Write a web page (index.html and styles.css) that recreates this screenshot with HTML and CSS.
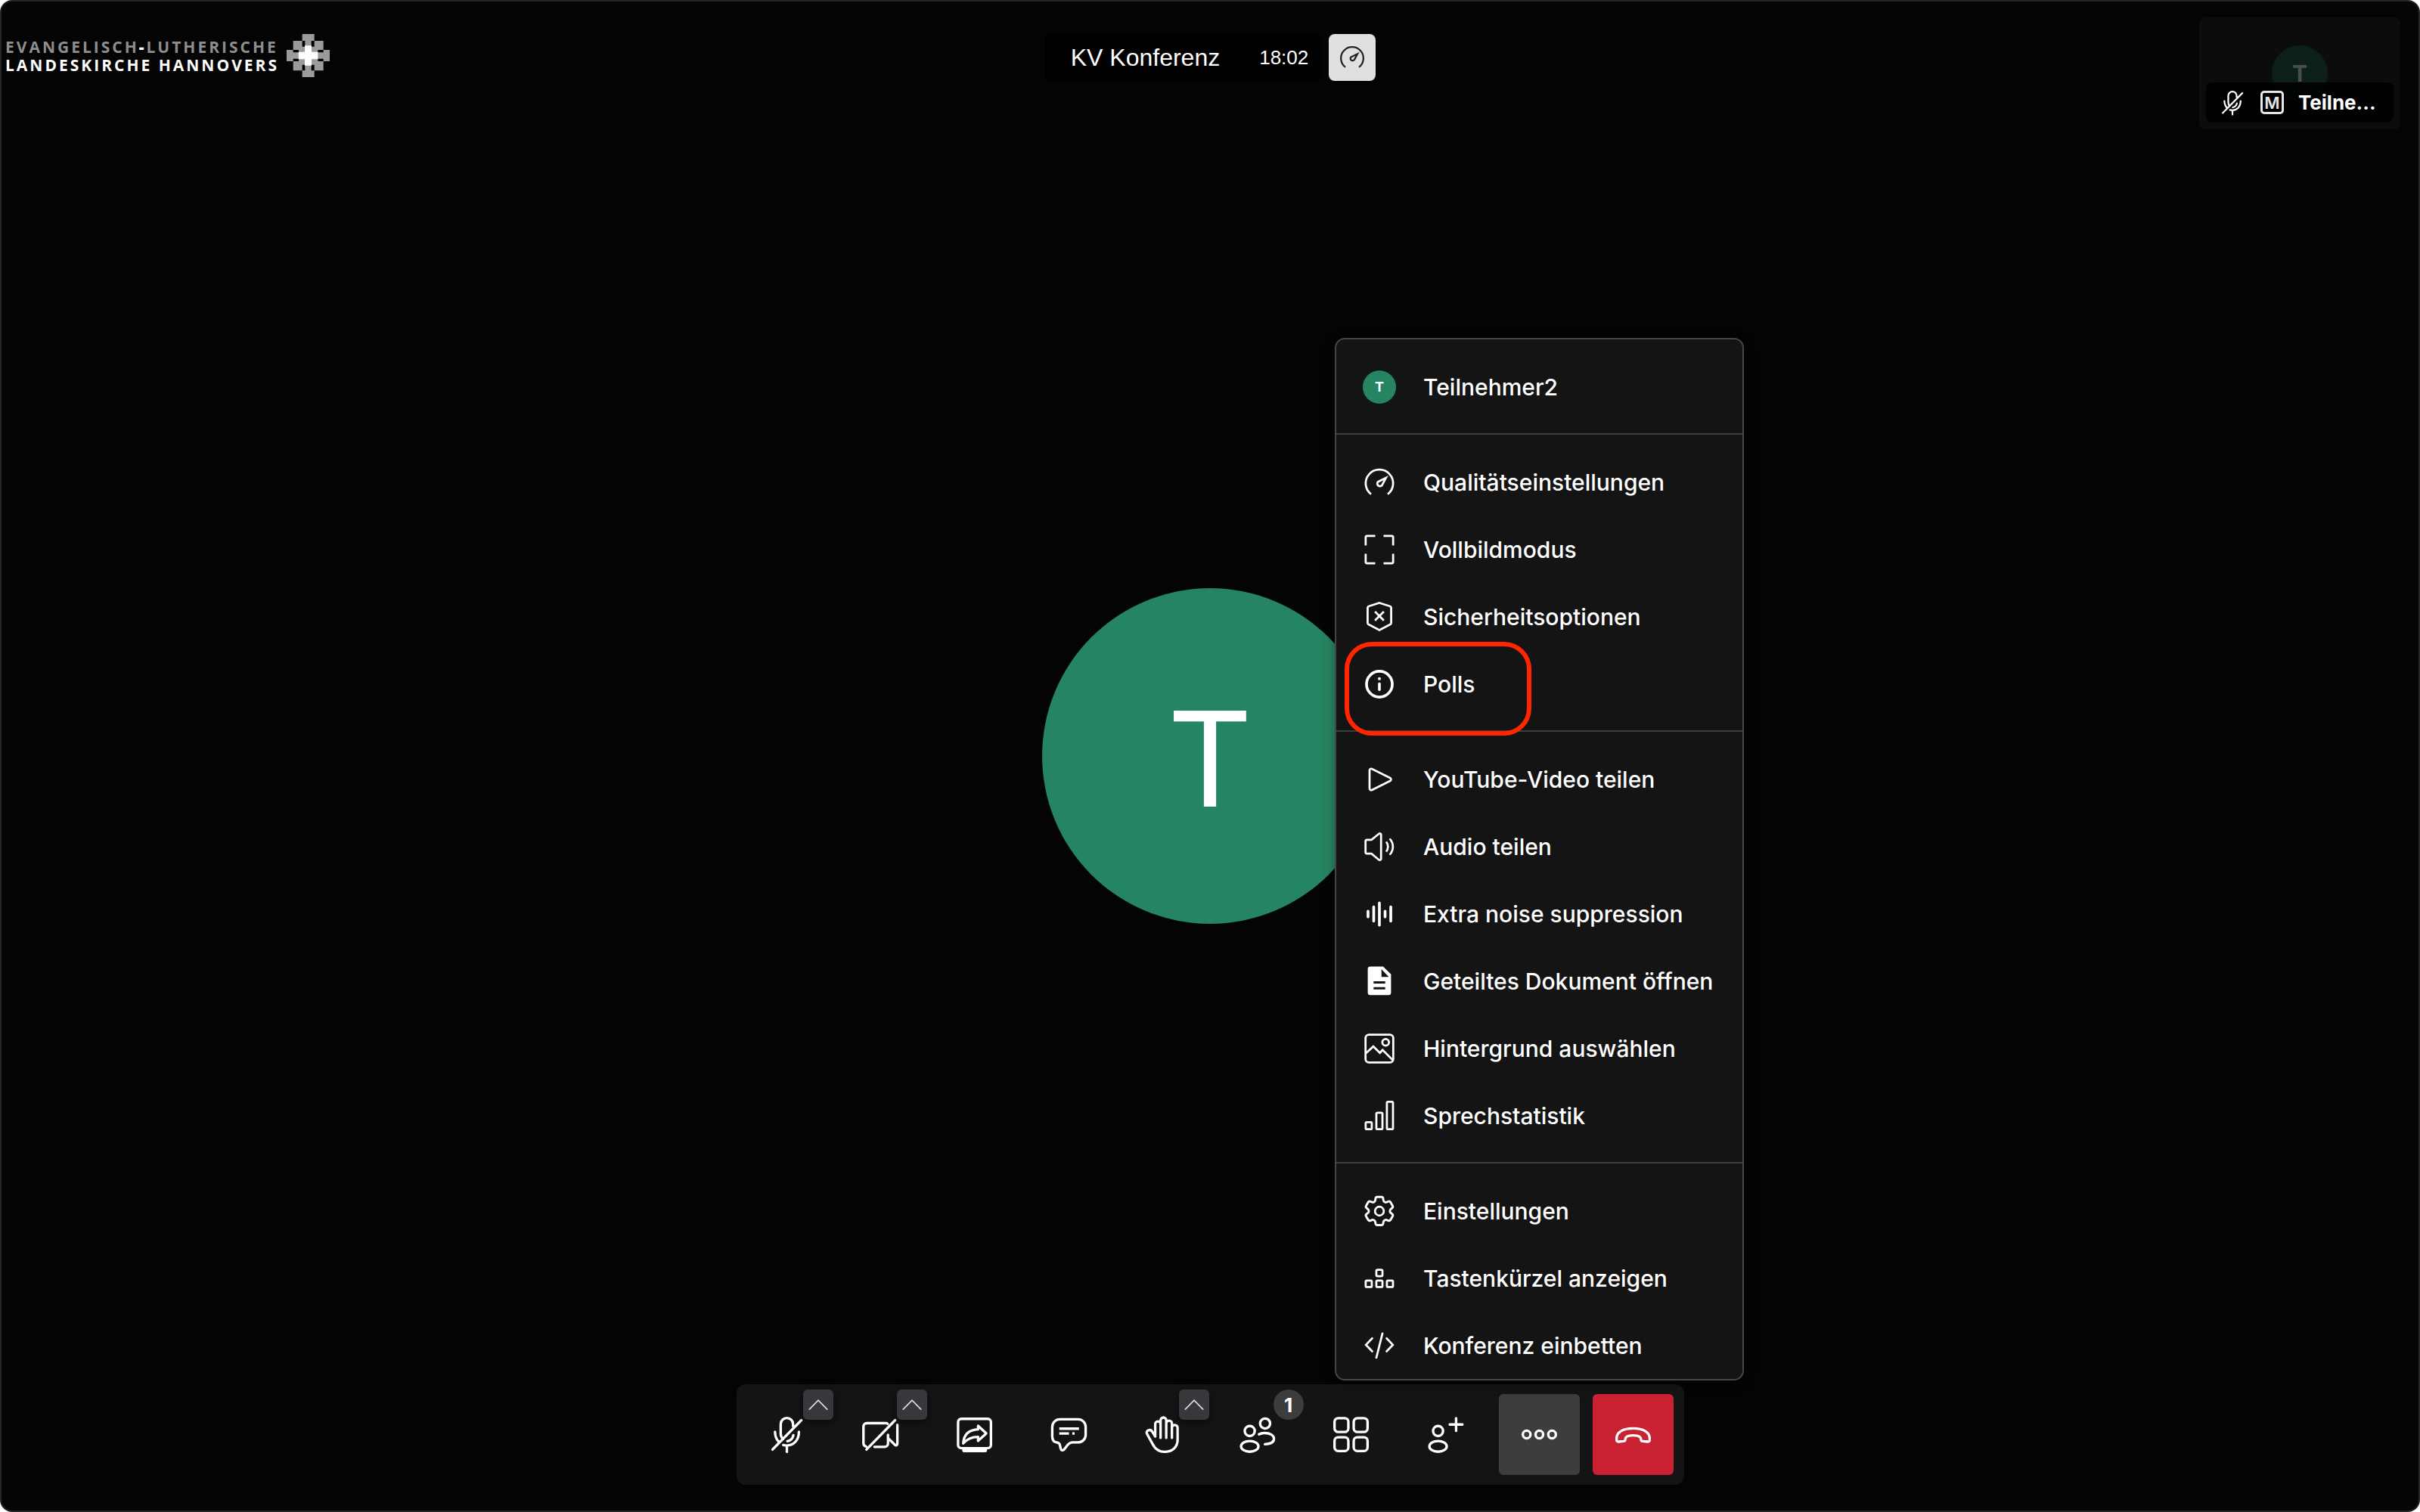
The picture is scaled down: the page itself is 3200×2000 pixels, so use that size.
FILE: index.html
```
<!DOCTYPE html>
<html lang="de">
<head>
  <meta charset="UTF-8" />
  <meta name="viewport" content="width=device-width, initial-scale=1" />
  <title>KV Konferenz</title>
  <link rel="stylesheet" href="styles.css">
</head>
<body>
  <!-- icon sprite -->
  <svg class="sprite" aria-hidden="true">
    <symbol id="i-gauge" viewBox="0 0 24 24">
      <path d="M6 20.6A9.9 9.9 0 1 1 18 20.6" />
      <path d="M16.7 8.8l-2.8 5.3a1.9 1.9 0 1 1-3-2.4z" />
    </symbol>
    <symbol id="i-fullscreen" viewBox="0 0 24 24">
      <path d="M9 2.1H3.1a1 1 0 0 0-1 1V9M15 2.1h5.9a1 1 0 0 1 1 1V9M9 21.9H3.1a1 1 0 0 1-1-1V15M15 21.9h5.9a1 1 0 0 0 1-1V15" />
    </symbol>
    <symbol id="i-shield" viewBox="0 0 24 24">
      <path d="M12 1.9l7.4 2.3c.7.2 1.1.7 1.1 1.4v10.6c0 .6-.3 1-.8 1.3L12 21.5l-7.7-4c-.5-.3-.8-.7-.8-1.3V5.6c0-.7.4-1.2 1.1-1.4z" />
      <path d="M8.8 8.2l6.4 6.4M15.2 8.2l-6.4 6.4" />
    </symbol>
    <symbol id="i-info" viewBox="0 0 24 24">
      <circle cx="12" cy="12" r="9.3" stroke-width="2" />
      <path d="M12 11.8v4.2" stroke-width="2" stroke-linecap="round" />
      <circle class="fill" cx="12" cy="8" r="1.1" />
    </symbol>
    <symbol id="i-play" viewBox="0 0 24 24">
      <path d="M4.9 5.5v13c0 1 .9 1.5 1.7 1.1l13.1-6.5c.9-.5.9-1.7 0-2.2L6.6 4.4c-.8-.4-1.7.1-1.7 1.1z" />
    </symbol>
    <symbol id="i-audio" viewBox="0 0 24 24">
      <path d="M13.2 3.4v17.3c0 .9-1 1.2-1.6.7L6.3 17H3a1 1 0 0 1-1-1V8a1 1 0 0 1 1-1h3.3l5.3-4.3c.6-.5 1.6-.2 1.6.7z" />
      <path d="M16.9 8.4c1.7 2.1 1.7 5.1 0 7.2M19.4 6.2c3.1 3.3 3.1 8.3 0 11.6" />
    </symbol>
    <symbol id="i-noise" viewBox="0 0 24 24">
      <path d="M3.8 10v4M7.9 6.8v10.4M12 4v16M16.1 10v4M20.2 6.8v10.4" stroke-width="2" stroke-linecap="round" />
    </symbol>
    <symbol id="i-doc" viewBox="0 0 24 24">
      <path class="fill" fill-rule="evenodd" d="M5.4 1.3h9.3l5.7 5.6v13.3a1.8 1.8 0 0 1-1.8 1.8H5.4a1.8 1.8 0 0 1-1.8-1.8V3.1a1.8 1.8 0 0 1 1.8-1.8zM13.5 3.3v5.6h5.3zM7.8 12v1.6h8.4V12zM7.8 16.2v1.6h8.4v-1.6z" />
    </symbol>
    <symbol id="i-picture" viewBox="0 0 24 24">
      <rect x="2" y="2" width="20" height="20" rx="2.4" />
      <circle cx="16.5" cy="7.5" r="2.4" />
      <path d="M2.2 15.4l5.4-4.9 4.8 4.6 1.9-2.1 7.4 7.4" />
    </symbol>
    <symbol id="i-stats" viewBox="0 0 24 24">
      <rect x="2.1" y="16.6" width="4.4" height="5" rx="0.8" />
      <rect x="9.8" y="9.8" width="4.4" height="11.8" rx="0.8" />
      <rect x="17.4" y="1.9" width="4.4" height="19.7" rx="0.8" />
    </symbol>
    <symbol id="i-gear" viewBox="0 0 24 24">
      <path transform="translate(-1.6 -1.6) scale(1.13)" stroke-width="1.4" d="M9.594 3.94c.09-.542.56-.94 1.11-.94h2.593c.55 0 1.02.398 1.11.94l.213 1.281c.063.374.313.686.645.87.074.04.147.083.22.127.325.196.72.257 1.075.124l1.217-.456a1.125 1.125 0 0 1 1.37.49l1.296 2.247a1.125 1.125 0 0 1-.26 1.431l-1.003.827c-.293.241-.438.613-.43.992a7.723 7.723 0 0 1 0 .255c-.008.378.137.75.43.991l1.004.827c.424.35.534.955.26 1.43l-1.298 2.247a1.125 1.125 0 0 1-1.369.491l-1.217-.456c-.355-.133-.75-.072-1.076.124a6.47 6.47 0 0 1-.22.128c-.331.183-.581.495-.644.869l-.213 1.281c-.09.543-.56.94-1.11.94h-2.594c-.55 0-1.019-.398-1.11-.94l-.213-1.281c-.062-.374-.312-.686-.644-.87a6.52 6.52 0 0 1-.22-.127c-.325-.196-.72-.257-1.076-.124l-1.217.456a1.125 1.125 0 0 1-1.369-.49l-1.297-2.247a1.125 1.125 0 0 1 .26-1.431l1.004-.827c.292-.24.437-.613.43-.991a6.932 6.932 0 0 1 0-.255c.007-.38-.138-.751-.43-.992l-1.004-.827a1.125 1.125 0 0 1-.26-1.43l1.297-2.247a1.125 1.125 0 0 1 1.37-.491l1.216.456c.356.133.751.072 1.076-.124.072-.044.146-.086.22-.128.332-.183.582-.495.644-.869l.214-1.28z" />
      <circle cx="12" cy="12" r="3.2" />
    </symbol>
    <symbol id="i-keys" viewBox="0 0 24 24">
      <rect x="9.8" y="5.8" width="4.4" height="4.6" rx="0.8" />
      <rect x="2.1" y="13.6" width="4.4" height="4.6" rx="0.8" />
      <rect x="9.8" y="13.6" width="4.4" height="4.6" rx="0.8" />
      <rect x="17.4" y="13.6" width="4.4" height="4.6" rx="0.8" />
    </symbol>
    <symbol id="i-embed" viewBox="0 0 24 24">
      <path d="M6.8 6.7l-4.5 4.7 4.5 4.7M17.2 6.7l4.5 4.7-4.5 4.7M14.2 3.2L9.8 20.7" stroke-linecap="round" />
    </symbol>
    <symbol id="i-mic-off" viewBox="0 0 24 24">
      <path stroke-linecap="round" d="M15.7 7V5.8a3.7 3.7 0 0 0-7.4 0v5.8c0 1.4.6 2.4 1.5 3.1M4.9 10.4c0 2.6.9 4.6 2.3 6M19.2 10.4c0 5-3.2 8.2-7.2 8.2-.8 0-1.5-.1-2.2-.3M12 18.6v3.8M15.9 12.4c-.4 2-1.7 3.3-3.6 3.6M20.7 3.4L3.4 21" />
    </symbol>
    <symbol id="i-cam-off" viewBox="0 0 24 24">
      <path stroke-linecap="round" stroke-linejoin="round" d="M16.2 5.6c-.3-.3-.8-.4-1.3-.4H3.7a2 2 0 0 0-2 2v10c0 1 .6 1.8 1.6 2M8.3 19.4h6.1a2 2 0 0 0 2-2v-5.2M16.5 14.2l4.1 4c.6.5 1.4.2 1.4-.6V6.2M20.7 3.4L3.5 21" />
    </symbol>
    <symbol id="i-share" viewBox="0 0 24 24">
      <rect x="2.2" y="2.6" width="19.7" height="17.6" rx="2" />
      <path class="fill" d="M4.7 20.4h14.8v1.2a1 1 0 0 1-1 1H5.7a1 1 0 0 1-1-1z" />
      <path stroke-linejoin="round" d="M5.3 17.3c.3-5 3.2-8.1 8.9-8.4V6.8l4.9 4.5-4.9 4.5v-2.4c-4.2 0-6.6 1.3-8.9 3.9z" />
    </symbol>
    <symbol id="i-chat" viewBox="0 0 24 24">
      <path d="M6.5 2.9h11a4.5 4.5 0 0 1 4.5 4.5v4.8a4.5 4.5 0 0 1-4.5 4.5h-3.1c-1.8 0-2.9 1-3.8 2.3l-1.3 1.7c-.9 1.2-2 .9-2.3-.4l-.5-2.2c-.2-.9-.8-1.2-2-1.4-1.6-.3-2.5-1.7-2.5-3.6V7.4a4.5 4.5 0 0 1 4.5-4.5z" />
      <path d="M6.2 8.5h11.8M6.2 11.4H12M14 11.4h1.4" />
    </symbol>
    <symbol id="i-hand" viewBox="0 0 24 24">
      <path stroke-linecap="round" d="M7.5 13.2V5.7a1.6 1.6 0 0 1 3.2 0M10.7 14V3.5a1.7 1.7 0 0 1 3.4 0V14M14.1 5.4a1.7 1.7 0 0 1 3.4 0V14M17.5 8a1.7 1.7 0 0 1 3.4 0v7.2c0 4.5-3.3 7.2-7.9 7.2-3.3 0-5.6-1.8-7-4.6l-3.4-6.1c-.5-1.1 0-2 .9-2.3s1.8.1 2.3 1l1.7 2.8" />
    </symbol>
    <symbol id="i-people" viewBox="0 0 24 24">
      <circle cx="7.5" cy="9.9" r="3" />
      <ellipse cx="7.5" cy="19.1" rx="5.2" ry="3.2" />
      <circle cx="16.7" cy="5.4" r="3" />
      <path stroke-linecap="round" d="M13 11.9c.9-.5 2-.8 3.3-.8 3.4 0 5.7 1.4 5.7 3.5 0 1.8-1.9 3-5.4 3.2" />
    </symbol>
    <symbol id="i-grid" viewBox="0 0 24 24">
      <rect x="2.1" y="2.2" width="8.3" height="8.3" rx="2.2" />
      <rect x="13.6" y="2.2" width="8.3" height="8.3" rx="2.2" />
      <rect x="2.1" y="13.6" width="8.3" height="8.3" rx="2.2" />
      <rect x="13.6" y="13.6" width="8.3" height="8.3" rx="2.2" />
    </symbol>
    <symbol id="i-invite" viewBox="0 0 24 24">
      <circle cx="7.5" cy="9.9" r="3" />
      <ellipse cx="7.5" cy="19.1" rx="5.2" ry="3.2" />
      <path stroke-linecap="round" d="M18.3 2.2v7.6M14.5 6h7.6" />
    </symbol>
    <symbol id="i-more" viewBox="0 0 24 24">
      <circle cx="4.4" cy="12" r="2.3" />
      <circle cx="12" cy="12" r="2.3" />
      <circle cx="19.6" cy="12" r="2.3" />
    </symbol>
    <symbol id="i-hangup" viewBox="0 0 24 24">
      <path stroke-linejoin="round" d="M2.1 14.2c0-3.6 4-5.9 9.9-5.9s9.9 2.3 9.9 5.9v1.2c0 .6-.5 1-1.1.9l-3.1-.3c-.6 0-1-.5-1-1.1 0-1.4-1.6-2.4-4.7-2.4s-4.7 1-4.7 2.4c0 .6-.4 1-1 1.1l-3.1.3c-.6.1-1.1-.3-1.1-.9z" />
    </symbol>
    <symbol id="i-up" viewBox="0 0 24 24">
      <path d="M2 17.2L12 7l10 10.2" stroke-linecap="round" />
    </symbol>
  </svg>

  <div class="app">
    <main class="stage">
      <div class="avatar avatar-big">T</div>
    </main>

    <header class="topbar">
      <a class="logo" href="#">
        <span class="logo-text">
          <span class="logo-sub">EVANGELISCH<b>-</b>LUTHERISCHE</span>
          <span>LANDESKIRCHE HANNOVERS</span>
        </span>
        <svg class="logo-mark" viewBox="0 0 171 171" aria-hidden="true">
          <path fill="#9b9b9b" d="M62 0h48v27h36v36h25v45h-25v37h-36v26H62v-26H26v-37H0V63h26V27h36z" />
          <path fill="#000" d="M62 27h11v23H62zM98 27h12v23H98zM62 122h11v23H62zM98 122h12v23H98zM26 63h22v10H26zM124 63h22v10h-22zM26 98h22v10H26zM124 98h22v10h-22z" />
          <path fill="#fff" d="M72 46h27v25h25v29H99v25H72v-25H47V71h25z" />
        </svg>
      </a>

      <div class="subject">
        <div class="subject-pill">
          <h1 class="subject-name">KV Konferenz</h1>
          <span class="subject-time">18:02</span>
        </div>
        <button class="quality" type="button" aria-label="Qualität">
          <svg class="icon icon-quality"><use href="#i-gauge" /></svg>
        </button>
      </div>

      <div class="tile">
        <div class="avatar avatar-tile">T</div>
        <div class="tile-label">
          <svg class="icon icon-tile"><use href="#i-mic-off" /></svg>
          <span class="moderator">M</span>
          <span>Teilne...</span>
        </div>
      </div>
    </header>

    <footer class="toolbar">
      <div class="tool">
        <button class="tool-btn" type="button" aria-label="Mikrofon"><svg class="icon"><use href="#i-mic-off" /></svg></button>
        <button class="tool-more" type="button" aria-label="Audioeinstellungen"><svg class="icon"><use href="#i-up" /></svg></button>
      </div>
      <div class="tool">
        <button class="tool-btn" type="button" aria-label="Kamera"><svg class="icon"><use href="#i-cam-off" /></svg></button>
        <button class="tool-more" type="button" aria-label="Videoeinstellungen"><svg class="icon"><use href="#i-up" /></svg></button>
      </div>
      <div class="tool">
        <button class="tool-btn" type="button" aria-label="Bildschirm teilen"><svg class="icon"><use href="#i-share" /></svg></button>
      </div>
      <div class="tool">
        <button class="tool-btn" type="button" aria-label="Chat"><svg class="icon"><use href="#i-chat" /></svg></button>
      </div>
      <div class="tool">
        <button class="tool-btn" type="button" aria-label="Hand heben"><svg class="icon"><use href="#i-hand" /></svg></button>
        <button class="tool-more" type="button" aria-label="Reaktionen"><svg class="icon"><use href="#i-up" /></svg></button>
      </div>
      <div class="tool">
        <button class="tool-btn" type="button" aria-label="Anwesende"><svg class="icon"><use href="#i-people" /></svg></button>
        <span class="badge">1</span>
      </div>
      <div class="tool">
        <button class="tool-btn" type="button" aria-label="Kachelansicht"><svg class="icon"><use href="#i-grid" /></svg></button>
      </div>
      <div class="tool">
        <button class="tool-btn" type="button" aria-label="Personen einladen"><svg class="icon"><use href="#i-invite" /></svg></button>
      </div>
      <div class="tool">
        <button class="tool-btn active" type="button" aria-label="Weitere Aktionen"><svg class="icon"><use href="#i-more" /></svg></button>

        <nav class="menu">
          <ul class="menu-group">
            <li><button class="menu-item" type="button"><span class="avatar avatar-menu">T</span>Teilnehmer2</button></li>
          </ul>
          <ul class="menu-group">
            <li><button class="menu-item" type="button"><svg class="icon"><use href="#i-gauge" /></svg>Qualitätseinstellungen</button></li>
            <li><button class="menu-item" type="button"><svg class="icon"><use href="#i-fullscreen" /></svg>Vollbildmodus</button></li>
            <li><button class="menu-item" type="button"><svg class="icon"><use href="#i-shield" /></svg>Sicherheitsoptionen</button></li>
            <li><button class="menu-item marked" type="button"><svg class="icon"><use href="#i-info" /></svg>Polls</button></li>
          </ul>
          <ul class="menu-group">
            <li><button class="menu-item" type="button"><svg class="icon"><use href="#i-play" /></svg>YouTube-Video teilen</button></li>
            <li><button class="menu-item" type="button"><svg class="icon"><use href="#i-audio" /></svg>Audio teilen</button></li>
            <li><button class="menu-item" type="button"><svg class="icon"><use href="#i-noise" /></svg>Extra noise suppression</button></li>
            <li><button class="menu-item" type="button"><svg class="icon"><use href="#i-doc" /></svg>Geteiltes Dokument öffnen</button></li>
            <li><button class="menu-item" type="button"><svg class="icon"><use href="#i-picture" /></svg>Hintergrund auswählen</button></li>
            <li><button class="menu-item" type="button"><svg class="icon"><use href="#i-stats" /></svg>Sprechstatistik</button></li>
          </ul>
          <ul class="menu-group">
            <li><button class="menu-item" type="button"><svg class="icon"><use href="#i-gear" /></svg>Einstellungen</button></li>
            <li><button class="menu-item" type="button"><svg class="icon"><use href="#i-keys" /></svg>Tastenkürzel anzeigen</button></li>
            <li><button class="menu-item" type="button"><svg class="icon"><use href="#i-embed" /></svg>Konferenz einbetten</button></li>
          </ul>
        </nav>
      </div>
      <div class="tool">
        <button class="tool-btn hangup" type="button" aria-label="Auflegen"><svg class="icon"><use href="#i-hangup" /></svg></button>
      </div>
    </footer>
  </div>
</body>
</html>
```
FILE: styles.css
```
*,
*::after {
  box-sizing: border-box;
}
body {
  margin: 0;
  background: #fff;
  color: #fff;
  font-family: Inter, "Liberation Sans", sans-serif;
}
button {
  margin: 0;
  padding: 0;
  border: none;
  background: none;
  color: inherit;
  font: inherit;
  cursor: pointer;
}
ul {
  list-style: none;
  margin: 0;
  padding: 0;
}
.sprite {
  display: none;
}
.icon {
  display: block;
  flex: none;
  width: 44px;
  height: 44px;
  fill: none;
  stroke: currentColor;
  stroke-width: 1.5;
}
.fill {
  fill: currentColor;
  stroke: none;
}

/* stage, top bar and toolbar share one grid cell */
.app {
  display: grid;
  grid-template: 1fr / 1fr;
  min-height: 100vh;
  background: #040404;
  border: 2px solid #262626;
  border-radius: 16px;
}
.stage,
.topbar,
.toolbar {
  grid-area: 1 / 1;
}
.stage {
  display: grid;
  place-items: center;
}
.avatar {
  display: flex;
  flex: none;
  align-items: center;
  justify-content: center;
  border-radius: 50%;
  background: #258461;
  color: #fff;
}
.avatar-big {
  width: 444px;
  height: 444px;
  padding-top: 6px;
  font-size: 174px;
}

/* top bar */
.topbar {
  align-self: start;
  display: grid;
  grid-template-columns: 1fr auto 1fr;
  align-items: start;
  padding: 21px 24px 0 5px;
}
.logo {
  display: flex;
  align-items: center;
  gap: 10px;
  margin-top: 22px;
  color: #fff;
  font: 700 21px/24px "Open Sans", sans-serif;
  letter-spacing: 3px;
  text-decoration: none;
  white-space: nowrap;
}
.logo-text {
  display: flex;
  flex-direction: column;
}
.logo-sub {
  color: #8e8e8e;
}
.logo-sub b {
  color: #fff;
}
.logo-mark {
  width: 57px;
  height: 57px;
}
.subject {
  display: flex;
  align-items: center;
  gap: 9px;
  margin-top: 22px;
  margin-left: 20px;
  font-family: "Liberation Sans", Arial, sans-serif;
}
.subject-pill {
  display: flex;
  align-items: center;
  height: 62px;
  border-radius: 8px;
  background: #000;
}
.subject-name {
  margin: 0;
  padding: 0 34px;
  font-size: 32px;
  font-weight: 400;
}
.subject-time {
  padding: 0 18px;
  font-size: 26px;
}
.quality {
  display: flex;
  align-items: center;
  justify-content: center;
  width: 62px;
  height: 62px;
  border-radius: 8px;
  background: #e0e0e0;
  color: #222;
}
.icon-quality {
  width: 36px;
  height: 36px;
}

/* own thumbnail */
.tile {
  position: relative;
  justify-self: end;
  display: flex;
  align-items: center;
  justify-content: center;
  width: 266px;
  height: 148px;
  border-radius: 8px;
  background: #0c0c0c;
}
.avatar-tile {
  width: 74px;
  height: 74px;
  background: #0c2019;
  color: #4a4d4c;
  font-size: 30px;
  font-weight: 700;
}
.tile-label {
  position: absolute;
  right: 9px;
  bottom: 9px;
  left: 9px;
  display: flex;
  align-items: center;
  gap: 19px;
  height: 53px;
  padding-left: 17px;
  border-radius: 8px;
  background: rgba(0, 0, 0, 0.85);
  font-size: 26px;
  font-weight: 700;
}
.icon-tile {
  width: 36px;
  height: 36px;
}
.moderator {
  display: flex;
  align-items: center;
  justify-content: center;
  width: 31px;
  height: 31px;
  border: 3px solid #e6e6e6;
  border-radius: 5px;
  color: #e6e6e6;
  font-size: 22px;
  font-weight: 600;
}

/* toolbar */
.toolbar {
  align-self: end;
  justify-self: center;
  display: flex;
  justify-content: space-between;
  width: 1253px;
  margin-bottom: 34px;
  padding: 13px;
  border-radius: 12px;
  background: #141414;
}
.tool {
  position: relative;
}
.tool-btn {
  display: flex;
  align-items: center;
  justify-content: center;
  width: 107px;
  height: 107px;
  border-radius: 6px;
}
.tool-btn .icon {
  width: 53px;
  height: 53px;
}
.active {
  background: #3d3d3d;
}
.hangup {
  background: #cb2233;
}
.tool-more,
.badge {
  position: absolute;
  top: -6px;
  right: -8px;
  display: flex;
  align-items: center;
  justify-content: center;
  width: 40px;
  height: 40px;
}
.tool-more {
  border-radius: 6px;
  background: #36383c;
  color: #ddd;
  box-shadow: 0 4px 12px rgba(0, 0, 0, 0.5);
}
.tool-more .icon {
  width: 28px;
  height: 28px;
}
.badge {
  border-radius: 50%;
  background: #3d3d3d;
  font-size: 26px;
  font-weight: 700;
}

/* overflow menu */
.menu {
  position: absolute;
  right: -217px;
  bottom: 125px;
  width: 541px;
  border: 2px solid #474747;
  border-radius: 13px;
  background: #141414;
  box-shadow: 0 4px 16px rgba(0, 0, 0, 0.3);
}
.menu-group {
  padding: 18px 0 17px;
}
.menu-group + .menu-group {
  border-top: 2px solid #3d3d3d;
}
.menu-group:last-child {
  padding-bottom: 0;
}
.menu-item {
  position: relative;
  display: flex;
  align-items: center;
  gap: 36px;
  width: 100%;
  height: 89px;
  padding-left: 35px;
  font-size: 30px;
  font-weight: 500;
  white-space: nowrap;
}
.avatar-menu {
  width: 44px;
  height: 44px;
  font-size: 18px;
  font-weight: 700;
}
.marked::after {
  content: "";
  position: absolute;
  top: -11px;
  left: 11px;
  z-index: 1;
  width: 247px;
  height: 124px;
  border: 6px solid #ff2600;
  border-radius: 36px;
}
```
